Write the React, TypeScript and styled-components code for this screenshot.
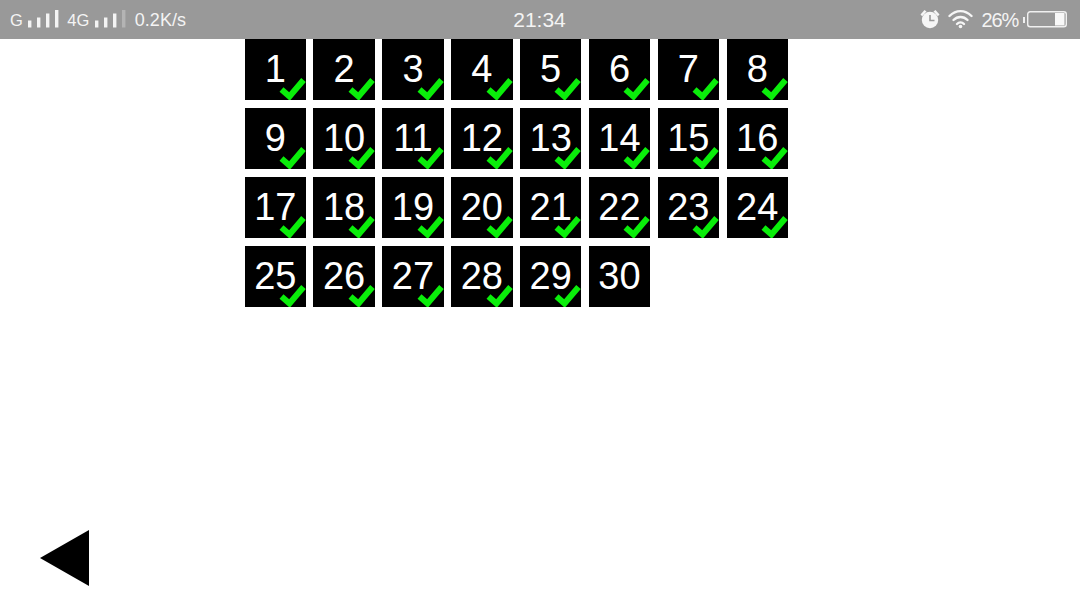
import * as React from "react";
import styled, { createGlobalStyle } from "styled-components";

const levels = Array.from({ length: 30 }, (_, i) => i + 1);
const done = (n: number) => n < 30;

const Signal = (props: { dimLast?: boolean }) => (
  <svg width="31" height="20" viewBox="0 0 31 20">
    <rect x="0" y="10.5" width="3.4" height="7" fill="#f4f4f4" />
    <rect x="9" y="7.5" width="3.4" height="10" fill="#f4f4f4" />
    <rect x="18" y="3.5" width="3.4" height="14" fill="#f4f4f4" />
    <rect
      x="27"
      y="-0.5"
      width="3.4"
      height="18"
      fill={props.dimLast ? "#b4b4b4" : "#f4f4f4"}
    />
  </svg>
);

const Alarm = () => (
  <svg width="20" height="22" viewBox="0 0 20 22">
    <circle cx="10" cy="11" r="8.2" fill="#f6f6f6" />
    <path d="M0.5 5.5 L4.5 1 L6.5 2.6 L2.2 7.2 Z" fill="#f6f6f6" />
    <path d="M19.5 5.5 L15.5 1 L13.5 2.6 L17.8 7.2 Z" fill="#f6f6f6" />
    <path d="M10 6 V11.5 H14.5" fill="none" stroke="#999" strokeWidth="1.6" />
  </svg>
);

const Wifi = () => (
  <svg width="25" height="22" viewBox="0 0 25 22">
    <g fill="none" stroke="#f6f6f6" strokeWidth="2.4" strokeLinecap="round">
      <path d="M1.5 7 C8 0.5 17 0.5 23.5 7" />
      <path d="M5.5 11 C9.5 7 15.5 7 19.5 11" />
      <path d="M9 15 C11 13 14 13 16 15" />
    </g>
    <circle cx="12.5" cy="17.5" r="1.8" fill="#f6f6f6" />
  </svg>
);

const Battery = () => (
  <svg width="44" height="20" viewBox="0 0 44 20">
    <rect x="0" y="7" width="2" height="6" fill="#f0f0f0" />
    <rect x="4.7" y="1.7" width="38.6" height="15" rx="2.5" fill="none" stroke="#f0f0f0" strokeWidth="1.4" />
    <rect x="32" y="3" width="9.5" height="12.5" fill="#f8f8f8" />
  </svg>
);

const Check = () => (
  <CheckIcon width="27" height="23" viewBox="0 0 27 23">
    <path
      d="M2.5 12.5 L10.5 19.5 L24.5 3"
      fill="none"
      stroke="#0aee0a"
      strokeWidth="6"
    />
  </CheckIcon>
);

export default function App() {
  return (
    <Page>
      <GlobalStyle />
      <StatusBar>
        <StatusLeft>
          <Carrier>G</Carrier>
          <Signal />
          <Carrier $gap={8}>4G</Carrier>
          <Signal dimLast />
          <Speed>0.2K/s</Speed>
        </StatusLeft>
        <Clock>21:34</Clock>
        <StatusRight>
          <Alarm />
          <Wifi />
          <Percent>26%</Percent>
          <Battery />
        </StatusRight>
      </StatusBar>
      <Board>
        {levels.map((n) => (
          <Tile key={n}>
            {n}
            {done(n) && <Check />}
          </Tile>
        ))}
      </Board>
      <Footer>
        <BackButton aria-label="back" />
      </Footer>
    </Page>
  );
}

//////////
// Style
//////////
const GlobalStyle = createGlobalStyle`
  html, body {
    margin: 0;
    padding: 0;
    background: #fff;
    font-family: "Liberation Sans", Arial, sans-serif;
  }
`;

const Page = styled.div`
  width: 1080px;
  height: 608px;
  display: flex;
  flex-direction: column;
  overflow: hidden;
`;

const StatusBar = styled.div`
  height: 39px;
  flex: none;
  display: grid;
  grid-template-columns: 1fr auto 1fr;
  align-items: center;
  background: #999;
  color: #f4f4f4;
  padding: 1px 13px 0 10px;
  box-sizing: border-box;
`;

const StatusLeft = styled.div`
  display: flex;
  align-items: center;
`;

const StatusRight = styled.div`
  display: flex;
  align-items: center;
  justify-content: flex-end;
  gap: 8px;
`;

const Carrier = styled.span<{ $gap?: number }>`
  font-size: 16.5px;
  margin-left: ${(p) => p.$gap || 0}px;
  margin-right: 5.5px;
`;

const Speed = styled.span`
  font-size: 18px;
  margin-left: 9px;
`;

const Clock = styled.span`
  font-size: 21px;
  margin-left: 2px;
`;

const Percent = styled.span`
  font-size: 20px;
  letter-spacing: -1.2px;
  margin-left: 1px;
  margin-right: -3px;
`;

const Board = styled.div`
  display: grid;
  grid-template-columns: repeat(8, 61.4px);
  column-gap: 7.46px;
  row-gap: 8px;
  padding-left: 244.6px;
`;

const Tile = styled.div`
  position: relative;
  height: 61px;
  background: #000;
  color: #fff;
  font-size: 38px;
  display: flex;
  align-items: center;
  justify-content: center;
`;

const CheckIcon = styled.svg`
  position: absolute;
  right: 0;
  bottom: 0;
`;

const Footer = styled.div`
  margin-top: auto;
  padding: 0 0 22px 40px;
`;

const BackButton = styled.div`
  width: 0;
  height: 0;
  border-top: 28px solid transparent;
  border-bottom: 28px solid transparent;
  border-right: 49px solid #000;
`;
